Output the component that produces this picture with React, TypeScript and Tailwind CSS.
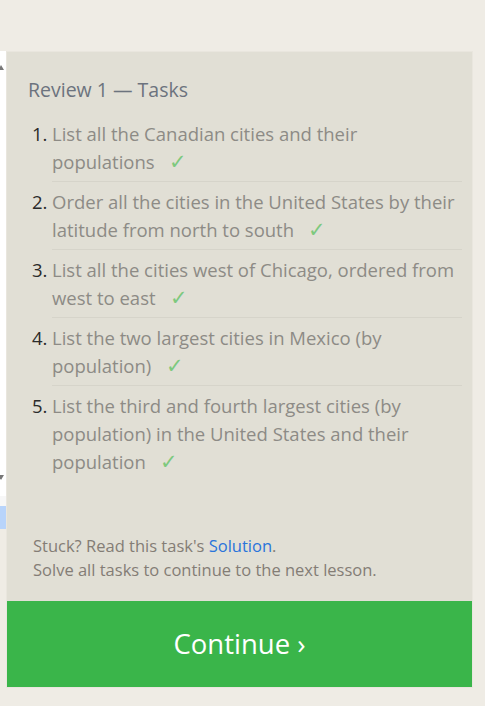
import React from "react";

const tasks: string[] = [
  "List all the Canadian cities and their populations",
  "Order all the cities in the United States by their latitude from north to south",
  "List all the cities west of Chicago, ordered from west to east",
  "List the two largest cities in Mexico (by population)",
  "List the third and fourth largest cities (by population) in the United States and their population",
];

export default function App() {
  return (
    <div
      className="w-[485px] h-[706px] bg-[#efece5] overflow-hidden pt-[51px]"
      style={{ fontFamily: '"Open Sans", "Noto Sans", sans-serif' }}
    >
      <div className="flex">
        <div className="w-[6px] shrink-0 flex flex-col">
          <div className="h-[445px] bg-white relative">
            <div className="absolute left-0 top-[14px] w-0 h-0 border-l-[3px] border-l-transparent border-r-[3px] border-r-transparent border-b-[5px] border-b-[#777]" style={{ left: -2 }} />
            <div className="absolute top-[424px] w-0 h-0 border-l-[3px] border-l-transparent border-r-[3px] border-r-transparent border-t-[5px] border-t-[#777]" style={{ left: -2 }} />
          </div>
          <div className="h-[10px] bg-[#f7f7f7]" />
          <div className="h-[23px] bg-[#b8d4fb]" />
        </div>
        <div className="w-[467px] shrink-0 bg-[#e1dfd5] border border-[#e9e6de] flex flex-col">
          <div className="pl-[21px] pr-[10px] pt-[26px]">
            <h2 className="text-[19.5px] leading-[24px] text-[#6c737e]">Review 1 — Tasks</h2>
            <ol className="mt-[12px]">
              {tasks.map((t, i) => (
                <li key={i} className="flex">
                  <div className="w-[24px] shrink-0 pt-[6px] text-[18.5px] leading-[28px] text-[#2b2b2b] pl-[4px]">
                    {i + 1}.
                  </div>
                  <div
                    className={
                      "flex-1 pt-[6px] pb-[5px] text-[18.5px] leading-[28px] text-[#8d8b86] " +
                      (i < tasks.length - 1 ? "border-b border-[#d6d4ca]" : "")
                    }
                  >
                    {t}
                    {"\u00a0\u00a0\u00a0"}
                    <span className="text-[#7dc97e] text-[21px] leading-[20px]">✓</span>
                  </div>
                </li>
              ))}
            </ol>
          </div>
          <div className="pl-[26px] pt-[53px] pb-[19px] text-[16.5px] leading-[24px] text-[#847d75]">
            <div>
              Stuck? Read this task's <span className="text-[#2a74db]">Solution</span>.
            </div>
            <div>Solve all tasks to continue to the next lesson.</div>
          </div>
          <div className="h-[86px] bg-[#3ab54a] flex items-center justify-center text-white text-[27.5px]">
            Continue ›
          </div>
        </div>
      </div>
    </div>
  );
}
